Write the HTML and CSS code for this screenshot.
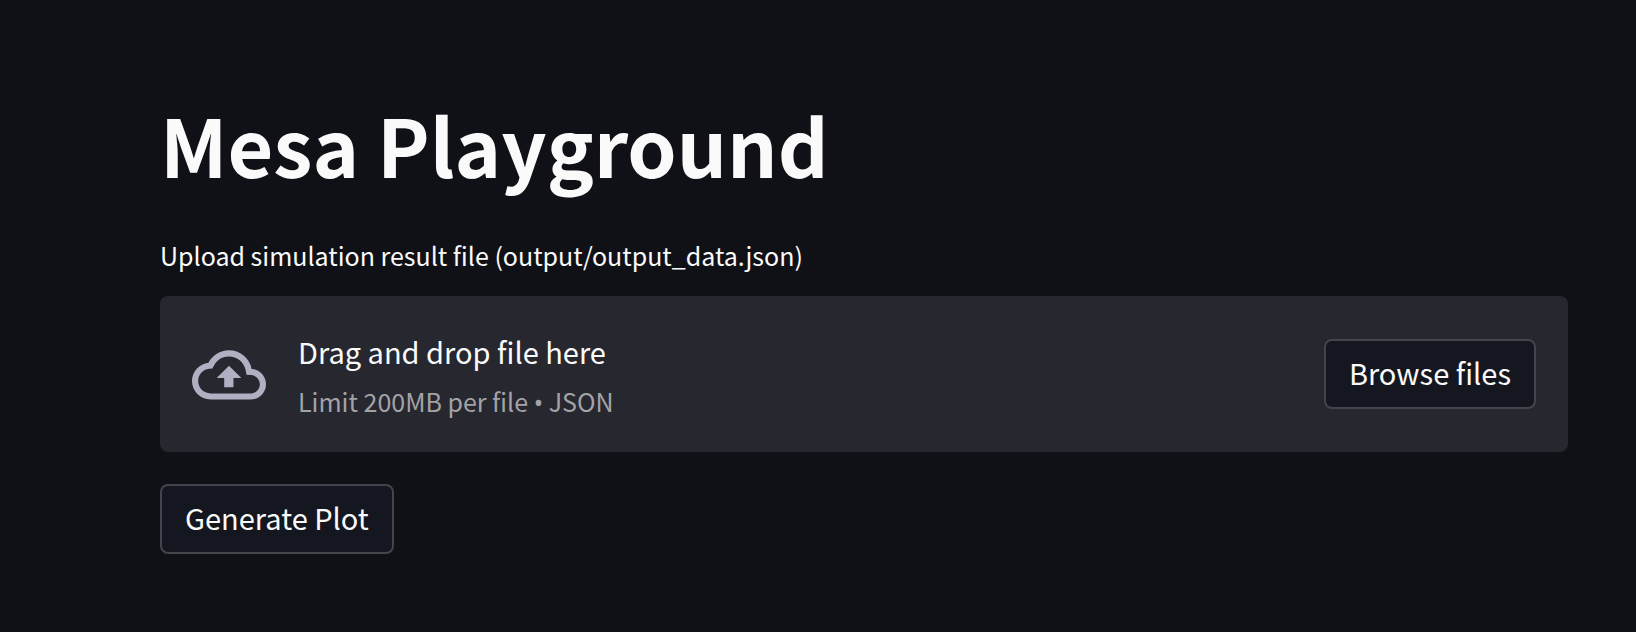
FILE: index.html
```html
<!DOCTYPE html>
<html lang="en">
<head>
<meta charset="utf-8">
<meta name="viewport" content="width=device-width, initial-scale=1">
<title>Mesa Playground</title>
<link rel="stylesheet" href="styles.css">
</head>
<body>
<main class="page">
  <h1 class="title">Mesa Playground</h1>
  <section class="uploader" aria-labelledby="upload-label">
    <p class="label" id="upload-label">Upload simulation result file (output/output_data.json)</p>
    <div class="dropzone">
      <svg class="cloud" viewBox="0 0 24 24" fill="currentColor" aria-hidden="true"><path d="M19.35 10.34A7.49 7.49 0 0012 4.300C9.110 4.300 6.600 5.940 5.350 8.340A5.994 5.994 0 000 14.300c0 3.310 2.690 6 6 6h13c2.760 0 5-2.240 5-5 0-2.640-2.050-4.780-4.650-4.960zM19 18.300H6c-2.210 0-4-1.790-4-4 0-2.050 1.530-3.760 3.560-3.970l1.070-.11.5-.95A5.469 5.469 0 0112 6.300c2.620 0 4.880 1.860 5.390 4.430l.3 1.500 1.530.11A2.980 2.980 0 0122 15.300c0 1.650-1.350 3-3 3zM8 13.300h2.450v3h3v-3H16l-4-4z"/></svg>
      <div class="instructions">
        <span class="prompt">Drag and drop file here</span>
        <small class="limit">Limit 200MB per file <span class="bullet">•</span> JSON</small>
      </div>
      <button class="button" type="button">Browse files</button>
    </div>
  </section>
  <button class="button" type="button">Generate Plot</button>
</main>
</body>
</html>
```
FILE: styles.css
```css
* {
  box-sizing: border-box;
}

body {
  margin: 0;
  background: #101116;
  color: #fafafa;
  font-family: "Noto Sans CJK SC", "Noto Sans", sans-serif;
}

.page {
  padding: 96px 68px 78px 160px;
}

.title {
  margin: 0 0 42px;
  font-size: 79px;
  font-weight: 700;
  line-height: 96px;
}

.uploader {
  margin-bottom: 32px;
}

.label {
  margin: 0 0 20px;
  font-size: 25px;
  line-height: 42px;
}

.dropzone {
  display: flex;
  align-items: center;
  padding: 32px;
  border-radius: 8px;
  background: #272730;
}

.cloud {
  flex: none;
  width: 74px;
  height: 74px;
  margin-right: 32px;
  color: #afb1c3;
}

.instructions {
  display: flex;
  flex: 1;
  flex-direction: column;
  gap: 8px;
}

.prompt {
  font-size: 29px;
  line-height: 46px;
}

.limit {
  color: #a3a3a6;
  font-size: 25px;
  line-height: 38px;
}

.bullet {
  font-family: "Noto Sans", sans-serif;
  line-height: 1;
}

.button {
  min-height: 70px;
  padding: 6px 23px 10px;
  border: 2px solid #43444c;
  border-radius: 8px;
  background: #14171f;
  color: inherit;
  font-family: inherit;
  font-size: 29px;
  line-height: 50px;
}
```
